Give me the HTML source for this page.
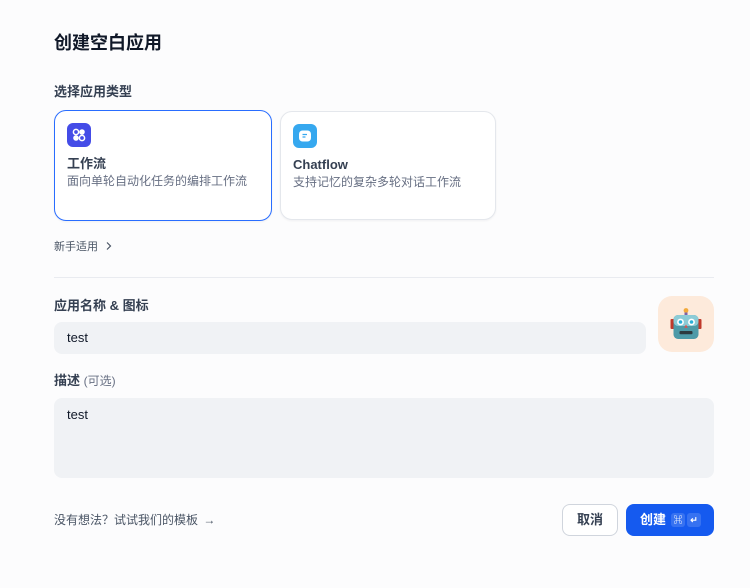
<!DOCTYPE html>
<html><head><meta charset="utf-8"><style>
*{box-sizing:border-box;margin:0;padding:0}
body{width:750px;height:588px;background:#fcfcfd;font-family:"Liberation Sans","Noto Sans CJK SC",sans-serif;color:#101828;position:relative;overflow:hidden}
.a{position:absolute}
.t{left:54px;top:31px;font-size:18px;font-weight:700;line-height:24px}
.lb{font-size:13px;font-weight:600;color:#354052;line-height:18px}
.card{background:#fff;border:1px solid #e4e7ec;border-radius:12px;box-shadow:0 1px 2px rgba(16,24,40,.05)}
.card.sel{border:1.5px solid #296dff}
.ic{width:24px;height:24px;border-radius:6px;position:absolute;left:12px;top:12px}
.ct{position:absolute;left:12px;top:44px;font-size:13px;font-weight:600;color:#354052;line-height:18px}
.cd{position:absolute;left:12px;top:62px;font-size:12px;color:#676f83;line-height:16px}
.in{background:#f0f2f5;border-radius:8px;font-size:13px;color:#101828;padding:0 13px}
</style></head><body>
<div class="a t">创建空白应用</div>
<div class="a lb" style="left:54px;top:83px">选择应用类型</div>
<div class="a card sel" style="left:54px;top:110px;width:218px;height:111px">
 <div class="ic" style="background:#444ce7"><svg width="24" height="24"><circle cx="9" cy="9" r="2.6" fill="none" stroke="#fff" stroke-width="1.5"/><circle cx="15" cy="9" r="2.8" fill="#fff"/><circle cx="9" cy="15" r="2.8" fill="#fff"/><circle cx="15" cy="15" r="2.6" fill="none" stroke="#fff" stroke-width="1.5"/></svg></div>
 <div class="ct">工作流</div><div class="cd">面向单轮自动化任务的编排工作流</div>
</div>
<div class="a card" style="left:280px;top:111px;width:216px;height:109px">
 <div class="ic" style="background:#36a8ef"><svg width="24" height="24"><rect x="6" y="6.5" width="12" height="11" rx="3.5" fill="#fff"/><path d="M9.5 10.5h4.5M9.5 13h3" stroke="#36a8ef" stroke-width="1.2"/></svg></div>
 <div class="ct">Chatflow</div><div class="cd">支持记忆的复杂多轮对话工作流</div>
</div>
<div class="a" style="left:54px;top:238px;font-size:11px;color:#495464">新手适用 <svg width="10" height="10" style="margin-left:3px;vertical-align:-1px"><path d="M3 1.5l3.5 3.5L3 8.5" stroke="#495464" stroke-width="1.2" fill="none"/></svg></div>
<div class="a" style="left:54px;top:277px;width:660px;height:1px;background:#e9ebf0"></div>
<div class="a lb" style="left:54px;top:297px">应用名称 &amp; 图标</div>
<div class="a in" style="left:54px;top:322px;width:592px;height:32px;line-height:32px">test</div>
<div class="a" style="left:658px;top:296px;width:56px;height:56px;border-radius:14px;background:#fdeadb">
 <svg width="56" height="56"><circle cx="28" cy="14.5" r="2.4" fill="#f2a93b"/><rect x="26.5" y="16.5" width="3" height="3" fill="#7b61a8"/><rect x="12.5" y="23" width="4" height="10" rx="1" fill="#c0392b"/><rect x="39.5" y="23" width="4" height="10" rx="1" fill="#c0392b"/><rect x="15.5" y="19" width="25" height="24" rx="4.5" fill="#4d9aa8"/><rect x="15.5" y="19" width="25" height="11" rx="4.5" fill="#8ccbd6"/><circle cx="22.5" cy="26" r="3.4" fill="#fff"/><circle cx="33.5" cy="26" r="3.4" fill="#fff"/><circle cx="22.5" cy="26" r="1.8" fill="#2ab0d8"/><circle cx="33.5" cy="26" r="1.8" fill="#2ab0d8"/><path d="M28 28.5l-1.8 3.2h3.6z" fill="#d9534f"/><rect x="21.5" y="35" width="13" height="3.2" rx="1" fill="#2d3a3f"/></svg>
</div>
<div class="a lb" style="left:54px;top:372px">描述 <span style="font-weight:400;font-size:12px;color:#676f83">(可选)</span></div>
<div class="a in" style="left:54px;top:398px;width:660px;height:80px;padding-top:9px">test</div>
<div class="a" style="left:54px;top:511px;font-size:12px;color:#495464">没有想法？试试我们的模板 <span style="margin-left:2px">→</span></div>
<div class="a" style="left:562px;top:504px;width:56px;height:32px;border:1px solid #d0d5dd;border-radius:8px;background:#fff;font-size:13px;font-weight:600;color:#354052;text-align:center;line-height:30px">取消</div>
<div class="a" style="left:626px;top:504px;width:88px;height:32px;border-radius:8px;background:#155aef;color:#fff;font-size:13px;font-weight:600;line-height:32px;padding-left:14px">创建<span style="display:inline-block;width:14px;height:14px;background:rgba(255,255,255,.15);border-radius:3px;font-size:9px;line-height:14px;text-align:center;margin-left:5px;vertical-align:1px">⌘</span><span style="display:inline-block;width:14px;height:14px;background:rgba(255,255,255,.15);border-radius:3px;font-size:9px;line-height:14px;text-align:center;margin-left:2px;vertical-align:1px">↵</span></div>
</body></html>
